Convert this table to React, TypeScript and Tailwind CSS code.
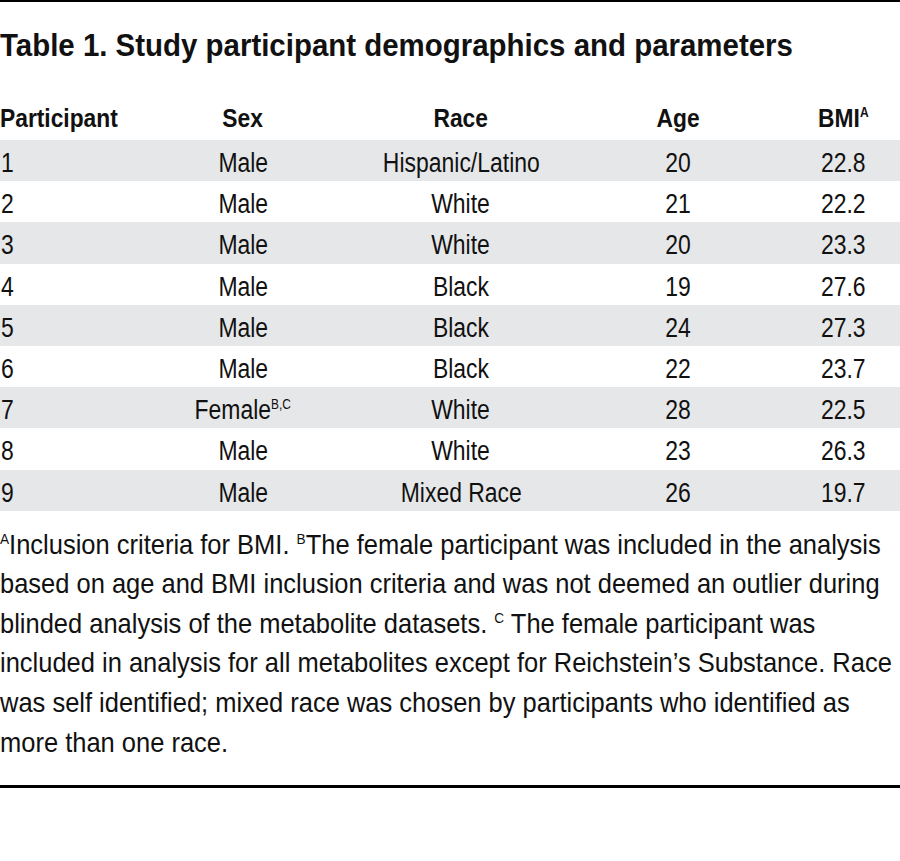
const rows = [
  { id: "1", sex: "Male", race: "Hispanic/Latino", age: "20", bmi: "22.8" },
  { id: "2", sex: "Male", race: "White", age: "21", bmi: "22.2" },
  { id: "3", sex: "Male", race: "White", age: "20", bmi: "23.3" },
  { id: "4", sex: "Male", race: "Black", age: "19", bmi: "27.6" },
  { id: "5", sex: "Male", race: "Black", age: "24", bmi: "27.3" },
  { id: "6", sex: "Male", race: "Black", age: "22", bmi: "23.7" },
  { id: "7", sex: "Female", race: "White", age: "28", bmi: "22.5", sup: "B,C" },
  { id: "8", sex: "Male", race: "White", age: "23", bmi: "26.3" },
  { id: "9", sex: "Male", race: "Mixed Race", age: "26", bmi: "19.7" },
];

// condensed look: Liberation Sans squeezed horizontally
const grid = "grid grid-cols-[134px_218px_218px_216px_114px]";
const cellL = "inline-block whitespace-nowrap origin-left scale-x-[0.85]";
const cellC = "inline-block whitespace-nowrap origin-center scale-x-[0.85]";
const headL = "inline-block whitespace-nowrap origin-left scale-x-[0.86]";
const headC = "inline-block whitespace-nowrap origin-center scale-x-[0.86]";

const App = () => {
  return (
    <div className="w-[900px] h-[861px] overflow-hidden bg-white text-[#111] font-['Liberation_Sans',Arial,sans-serif]">
      <div className="border-t-2 border-black" />

      <h1 className="pt-[24px] text-[32px] leading-[38px] font-bold">
        <span className="inline-block whitespace-nowrap origin-left scale-x-[0.92]">
          Table 1. Study participant demographics and parameters
        </span>
      </h1>

      <div className={`${grid} mt-[37px] h-[39px] text-[26.5px] font-bold leading-[34px]`}>
        <div>
          <span className={headL}>Participant</span>
        </div>
        <div className="text-center">
          <span className={headC}>Sex</span>
        </div>
        <div className="text-center">
          <span className={headC}>Race</span>
        </div>
        <div className="text-center">
          <span className={headC}>Age</span>
        </div>
        <div className="text-center">
          <span className={headC}>
            BMI<sup className="text-[14px] -top-[10px]">A</sup>
          </span>
        </div>
      </div>

      <div>
        {rows.map((r, i) => (
          <div
            key={r.id}
            className={`${grid} h-[41.2px] pt-[6px] text-[27px] leading-[34px] ${
              i % 2 === 0 ? "bg-[#e6e7e8]" : "bg-white"
            }`}
          >
            <div className="pl-[1px]">
              <span className={cellL}>{r.id}</span>
            </div>
            <div className="text-center">
              <span className={cellC}>
                {r.sex}
                {r.sup && <sup className="text-[14px] -top-[10px]">{r.sup}</sup>}
              </span>
            </div>
            <div className="text-center">
              <span className={cellC}>{r.race}</span>
            </div>
            <div className="text-center">
              <span className={cellC}>{r.age}</span>
            </div>
            <div className="text-center">
              <span className={cellC}>{r.bmi}</span>
            </div>
          </div>
        ))}
      </div>

      <p className="mt-[14px] w-[980px] origin-left scale-x-[0.91] whitespace-nowrap text-[28px] leading-[39.6px]">
        <sup className="text-[15px] -top-[10px]">A</sup>Inclusion criteria for BMI.{" "}
        <sup className="text-[15px] -top-[10px]">B</sup>The female participant was included in the analysis
        <br />
        based on age and BMI inclusion criteria and was not deemed an outlier during
        <br />
        blinded analysis of the metabolite datasets. <sup className="text-[15px] -top-[10px]">C</sup> The female
        participant was
        <br />
        included in analysis for all metabolites except for Reichstein’s Substance. Race
        <br />
        was self identified; mixed race was chosen by participants who identified as
        <br />
        more than one race.
      </p>

      <div className="mt-[23px] border-t-[3px] border-black" />
    </div>
  );
};

export default App;
